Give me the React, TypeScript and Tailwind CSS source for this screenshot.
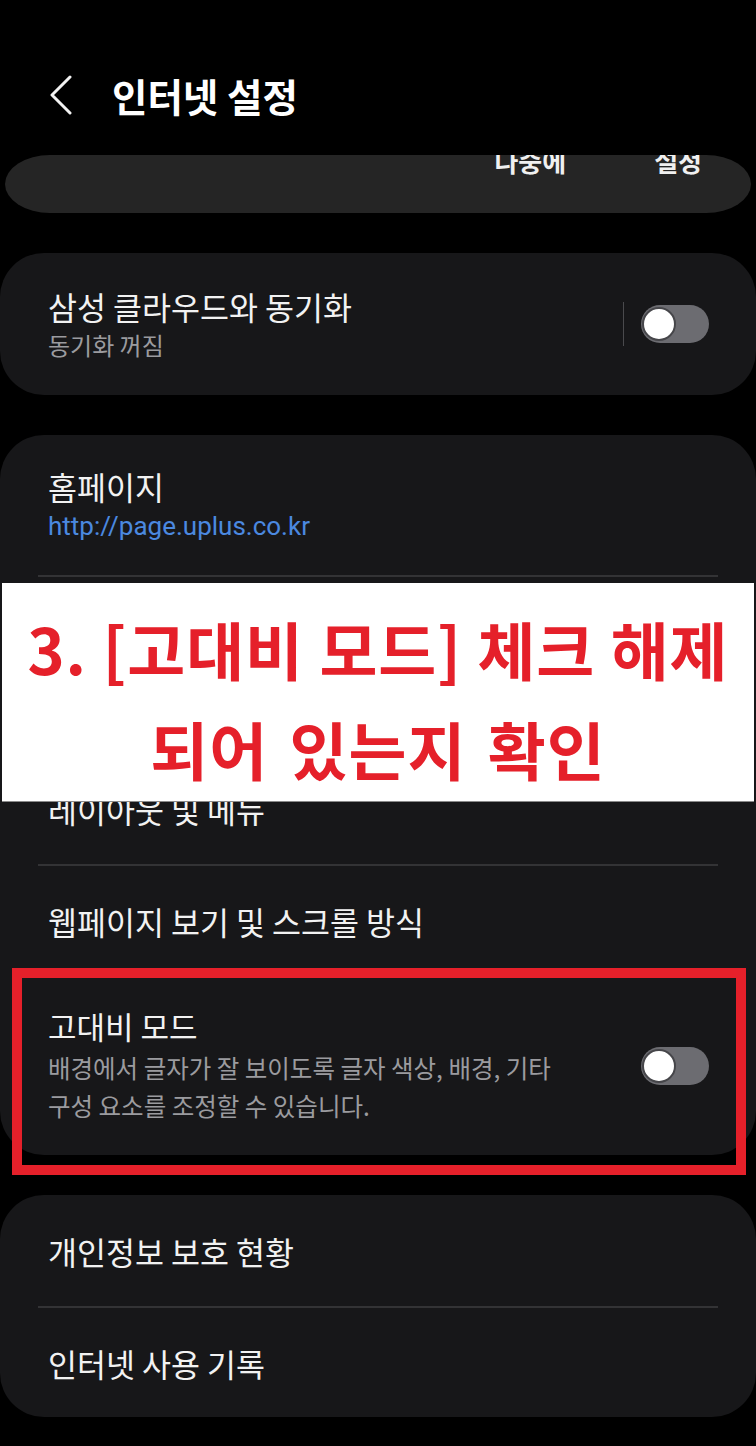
import React from "react";

const KR = { fontFamily: '"Noto Sans CJK KR", "Noto Sans", sans-serif' };

function Toggle() {
  return (
    <div className="relative w-[68px] h-[38px] rounded-full bg-[#6c6c71] shrink-0">
      <div className="absolute left-[1px] top-[2px] w-[34px] h-[34px] rounded-full bg-white border-2 border-[#46464a]" />
    </div>
  );
}

function Divider() {
  return <div className="mx-[38px] h-[2px] bg-[#333335]" />;
}

function Row({ title, h }: { title: string; h: string }) {
  return (
    <div className={`flex items-center px-[48px] ${h}`}>
      <span className="text-[31.5px] leading-[40px] text-[#f2f2f2]">{title}</span>
    </div>
  );
}

export default function App() {
  return (
    <div className="relative w-[756px] h-[1446px] bg-black overflow-hidden" style={KR}>
      {/* Header */}
      <div className="h-[155px] pt-[72px]">
        <div className="flex items-center h-[46px]">
          <svg className="ml-[48px]" width="26" height="40" viewBox="0 0 26 40" fill="none">
            <polyline points="22,2 4,20 22,38" stroke="#f2f2f2" strokeWidth="3" strokeLinecap="round" strokeLinejoin="round" />
          </svg>
          <h1 className="ml-[38px] text-[38.5px] font-bold text-white leading-[46px]">인터넷 설정</h1>
        </div>
      </div>

      {/* Scrolled-away prompt card */}
      <div className="mx-[5px] h-[58px] rounded-[45px/29px] bg-[#252525] overflow-hidden">
        <div className="flex justify-end items-start -mt-[7px] pr-[49px] gap-[88px] text-[26px] leading-[26px] font-semibold text-[#f0f0f0]">
          <span>나중에</span>
          <span>설정</span>
        </div>
      </div>

      {/* Samsung Cloud */}
      <div className="mt-[40px] h-[142px] rounded-[44px] bg-[#171719] flex items-center justify-between pl-[48px] pr-[47px]">
        <div className="flex flex-col">
          <span className="text-[31.5px] leading-[42px] text-[#f2f2f2]">삼성 클라우드와 동기화</span>
          <span className="text-[24px] leading-[36px] text-[#9b9b9f]">동기화 꺼짐</span>
        </div>
        <div className="flex items-center gap-[17px]">
          <div className="w-px h-[44px] bg-[#4a4a4d]" />
          <Toggle />
        </div>
      </div>

      {/* Main settings */}
      <div className="mt-[40px] rounded-[44px] bg-[#171719] overflow-hidden">
        <div className="h-[140px] flex flex-col justify-center px-[48px]">
          <span className="text-[31.5px] leading-[42px] text-[#f2f2f2]">홈페이지</span>
          <span className="text-[26px] leading-[38px] text-[#4b89e0]" style={{ fontFamily: "Roboto, sans-serif" }}>
            http://page.uplus.co.kr
          </span>
        </div>
        <Divider />
        {/* row hidden under the banner */}
        <div className="h-[175px]" />
        <Divider />
        <Row title="레이아웃 및 메뉴" h="h-[110px]" />
        <Divider />
        <Row title="웹페이지 보기 및 스크롤 방식" h="h-[110px]" />
        <div className="h-[179px] flex items-center justify-between pl-[48px] pr-[47px]">
          <div className="flex flex-col">
            <span className="text-[31px] leading-[38px] text-[#f2f2f2]">고대비 모드</span>
            <span className="mt-[4px] text-[24.5px] leading-[38px] text-[#9b9b9f]">
              <span className="block">배경에서 글자가 잘 보이도록 글자 색상, 배경, 기타</span>
              <span className="block">구성 요소를 조정할 수 있습니다.</span>
            </span>
          </div>
          <Toggle />
        </div>
      </div>

      {/* Privacy */}
      <div className="mt-[40px] rounded-[44px] bg-[#171719] overflow-hidden">
        <Row title="개인정보 보호 현황" h="h-[111px]" />
        <Divider />
        <Row title="인터넷 사용 기록" h="h-[109px]" />
      </div>

      {/* Annotation banner */}
      <div className="absolute left-[2px] top-[583px] w-[752px] h-[219px] bg-white border-b border-[#8a8a8a] pt-[15px] text-center text-[63px] leading-[100px] font-bold text-[#e5202a]">
        <div className="tracking-[1px] whitespace-nowrap">3. [고대비 모드] 체크 해제</div>
        <div className="tracking-[1px] whitespace-nowrap [word-spacing:6px]">되어 있는지 확인</div>
      </div>

      {/* Highlight box */}
      <div className="absolute left-[12px] top-[968px] w-[734px] h-[207px] border-[10px] border-[#e5202a]" />
    </div>
  );
}
